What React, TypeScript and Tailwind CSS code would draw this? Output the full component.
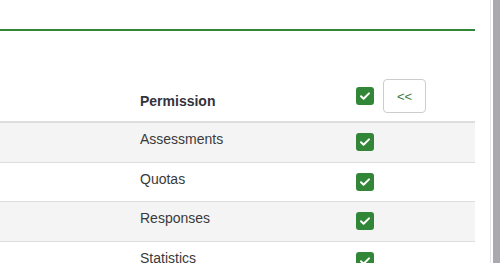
import React from 'react';

const CheckBox: React.FC = () => (
  <span className="inline-flex w-[18px] h-[18px] rounded-[3px] bg-[#328637] items-center justify-center">
    <svg width="12" height="12" viewBox="0 0 12 12" fill="none">
      <path d="M2 6.2l2.6 2.6L10 3.4" stroke="white" strokeWidth="2" strokeLinecap="round" strokeLinejoin="round" />
    </svg>
  </span>
);

const rows = [
  { label: 'Assessments', h: 'h-[40px]', bg: 'bg-[#f4f4f4]' },
  { label: 'Quotas', h: 'h-[39px]', bg: 'bg-white' },
  { label: 'Responses', h: 'h-[40px]', bg: 'bg-[#f4f4f4]' },
  { label: 'Statistics', h: 'h-[40px]', bg: 'bg-white' },
];

export default function App() {
  return (
    <div
      className="w-[500px] h-[263px] flex bg-white overflow-hidden text-[14px] text-[#3a3a3a]"
      style={{ fontFamily: '"Liberation Sans", Arial, sans-serif' }}
    >
      <div className="w-[475px] shrink-0 flex flex-col">
        <div className="h-[29px] shrink-0" />
        <div className="h-[2px] shrink-0 bg-[#328637]" />
        <div className="h-[92px] shrink-0 flex items-end border-b-2 border-[#dddddd] pb-[8px]">
          <div className="w-[140px] shrink-0" />
          <div className="w-[216px] shrink-0 font-bold text-[#33333d] leading-[20px] pb-[2px]">Permission</div>
          <div className="flex items-center gap-[9px]">
            <CheckBox />
            <button className="w-[43px] h-[34px] rounded-[4px] border border-[#cccccc] bg-white text-[#3f7a42] text-[13px] leading-none">
              &lt;&lt;
            </button>
          </div>
        </div>
        {rows.map((r) => (
          <div key={r.label} className={`${r.h} shrink-0 flex items-start border-b border-[#dddddd] ${r.bg}`}>
            <div className="w-[140px] shrink-0" />
            <div className="w-[216px] shrink-0 pt-[6px] leading-[20px]">{r.label}</div>
            <div className="pt-[10px] flex">
              <CheckBox />
            </div>
          </div>
        ))}
      </div>
      <div className="w-[16px] shrink-0 border-r border-[#e6e6e8]" />
      <div className="w-[2px] shrink-0" />
      <div className="w-[7px] shrink-0 bg-[#a9a9ae]" />
    </div>
  );
}
